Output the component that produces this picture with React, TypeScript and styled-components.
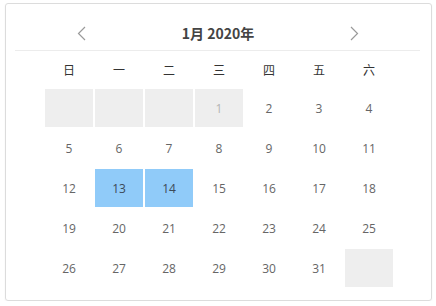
import React from 'react';
import styled, { createGlobalStyle } from 'styled-components';

const GlobalStyles = createGlobalStyle`
  html, body {
    margin: 0;
    padding: 0;
    background: #ffffff;
  }
  body {
    font-family: "Open Sans", "Noto Sans CJK SC", sans-serif;
  }
`;

const Page = styled('div')`
  padding: 3px 0 0 5px;
`;

const Card = styled('div')`
  width: 425px;
  height: 296px;
  border: 1px solid #dcdcdc;
  border-radius: 3px;
  box-shadow: 0 1px 2px rgba(0, 0, 0, 0.06);
  display: flex;
  flex-direction: column;
`;

const Header = styled('div')`
  height: 47px;
  margin: 0 11px 0 9px;
  padding: 12px 60px 0 61px;
  display: flex;
  align-items: center;
  justify-content: space-between;
  border-bottom: 1px solid #ececec;
  box-sizing: border-box;
`;

const Title = styled('div')`
  font-family: "Noto Sans CJK SC", sans-serif;
  font-size: 14px;
  font-weight: 700;
  color: #444;
`;

const Arrow = styled('button')`
  border: 0;
  background: none;
  padding: 0;
  width: 10px;
  height: 16px;
  display: flex;
  align-items: center;
  justify-content: center;
  cursor: pointer;
`;

const WeekRow = styled('div')`
  margin: 8px 0 10px 38px;
  display: grid;
  grid-template-columns: repeat(7, 50px);
`;

const WeekDay = styled('div')`
  height: 20px;
  display: flex;
  align-items: center;
  justify-content: center;
  font-family: "Noto Sans CJK SC", sans-serif;
  font-size: 12px;
  color: #333;
`;

const Grid = styled('div')`
  margin-left: 38px;
  display: grid;
  grid-template-columns: repeat(7, 50px);
  grid-auto-rows: 40px;
`;

const Day = styled('div')<{ $kind: 'blank' | 'out' | 'normal' | 'selected' }>`
  margin: 0 1px 2px 1px;
  display: flex;
  align-items: center;
  justify-content: center;
  font-size: 12px;
  color: ${(p) => (p.$kind === 'out' ? '#b4b4b4' : p.$kind === 'selected' ? '#3d4a57' : '#666666')};
  background: ${(p) =>
    p.$kind === 'blank' || p.$kind === 'out' ? '#eeeeee' : p.$kind === 'selected' ? '#90cbf9' : 'transparent'};
`;

const weekDays = ['日', '一', '二', '三', '四', '五', '六'];

type Cell = { label: string; kind: 'blank' | 'out' | 'normal' | 'selected' };

const cells: Cell[] = [
  { label: '', kind: 'blank' },
  { label: '', kind: 'blank' },
  { label: '', kind: 'blank' },
  { label: '1', kind: 'out' },
];
for (let d = 2; d <= 31; d++) {
  cells.push({ label: String(d), kind: d === 13 || d === 14 ? 'selected' : 'normal' });
}
cells.push({ label: '', kind: 'blank' });

function Chevron({ dir }: { dir: 'left' | 'right' }) {
  return (
    <svg width="9" height="15" viewBox="0 0 9 15">
      <path
        d={dir === 'left' ? 'M8 1 L1.5 7.5 L8 14' : 'M1 1 L7.5 7.5 L1 14'}
        fill="none"
        stroke="#9a9a9a"
        strokeWidth="1.2"
      />
    </svg>
  );
}

export default function App() {
  return (
    <>
      <GlobalStyles />
      <Page>
        <Card>
          <Header>
            <Arrow aria-label="previous month">
              <Chevron dir="left" />
            </Arrow>
            <Title>1月 2020年</Title>
            <Arrow aria-label="next month">
              <Chevron dir="right" />
            </Arrow>
          </Header>
          <WeekRow>
            {weekDays.map((w) => (
              <WeekDay key={w}>{w}</WeekDay>
            ))}
          </WeekRow>
          <Grid>
            {cells.map((c, i) => (
              <Day key={i} $kind={c.kind}>
                {c.label}
              </Day>
            ))}
          </Grid>
        </Card>
      </Page>
    </>
  );
}
